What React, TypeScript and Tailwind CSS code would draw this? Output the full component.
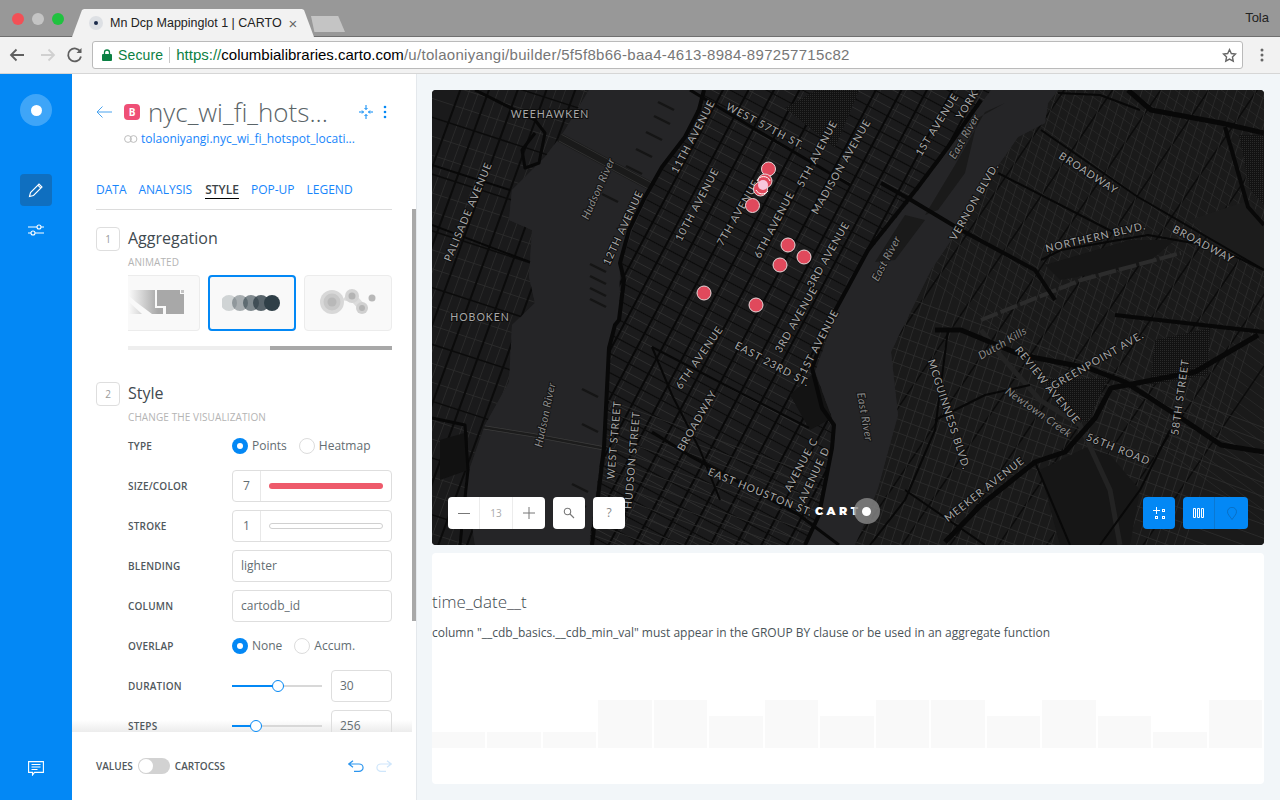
import React from 'react';

// Street grid helper: n parallel lines at an angle, offset from an origin
const lines = (ox: number, oy: number, deg: number, gap: number, n: number) => {
  const a = (deg * Math.PI) / 180;
  const dx = Math.cos(a);
  const dy = Math.sin(a);
  let d = '';
  for (let i = -n; i <= n; i++) {
    const px = ox - dy * gap * i;
    const py = oy + dx * gap * i;
    d += `M${(px - dx * 900).toFixed(1)} ${(py - dy * 900).toFixed(1)}L${(px + dx * 900).toFixed(1)} ${(py + dy * 900).toFixed(1)}`;
  }
  return d;
};

const poly = (pts: number[][]) => 'M' + pts.map((p) => p.join(' ')).join('L');

const NJ = [[432, 90], [589, 90], [565, 130], [545, 157], [512, 190], [509, 220], [532, 230], [529, 277], [535, 303], [512, 325], [509, 382], [485, 425], [465, 482], [475, 545], [432, 545]];
const MN = [[704, 90], [991, 90], [948, 150], [911, 200], [868, 253], [848, 280], [832, 325], [815, 372], [832, 418], [835, 438], [819, 515], [805, 545], [589, 545], [602, 448], [609, 348], [619, 320], [620, 267], [632, 230], [659, 173], [689, 130]];
const QN = [[1058, 90], [1264, 90], [1264, 545], [855, 545], [861, 532], [878, 488], [898, 415], [891, 352], [908, 317], [931, 270], [958, 230], [995, 170], [1018, 137], [1045, 123], [1048, 103]];

const ROADS: { w: number; pts: number[][] }[] = [
  { w: 4, pts: [[704, 90], [699, 110], [685, 137], [662, 167], [645, 197], [629, 230], [620, 263], [624, 280], [619, 320], [615, 325], [609, 348], [604, 448], [592, 545]] },
  { w: 4, pts: [[981, 100], [948, 147], [918, 187], [868, 250], [848, 287], [829, 322], [812, 368], [822, 408], [834, 425], [832, 448], [819, 515], [805, 545]] },
  { w: 4, pts: [[881, 183], [911, 200], [961, 230], [1035, 270], [1055, 300]] },
  { w: 3, pts: [[652, 432], [692, 457], [799, 515], [839, 545]] },
  { w: 2, pts: [[652, 347], [725, 385], [809, 428]] },
  { w: 3, pts: [[690, 90], [765, 135], [850, 185]] },
  { w: 2, pts: [[652, 347], [672, 395], [700, 450], [720, 500]] },
  { w: 5, pts: [[1128, 90], [1151, 110], [1221, 123], [1264, 133]] },
  { w: 4, pts: [[1225, 127], [1248, 207], [1264, 225]] },
  { w: 5, pts: [[935, 330], [961, 330], [1021, 355], [1088, 368], [1125, 382], [1181, 418], [1221, 445], [1264, 452]] },
  { w: 5, pts: [[945, 542], [981, 505], [1035, 462], [1065, 452], [1095, 418], [1111, 388], [1195, 372], [1258, 335]] },
  { w: 4, pts: [[1115, 315], [1264, 332]] },
  { w: 2, pts: [[1041, 130], [1138, 197], [1264, 270]] },
  { w: 2, pts: [[1041, 260], [1061, 250], [1148, 235], [1215, 247], [1264, 270]] },
  { w: 2, pts: [[998, 173], [1115, 233]] },
  { w: 2, pts: [[1058, 93], [1100, 95], [1140, 110]] },
  { w: 2, pts: [[948, 330], [935, 430], [905, 500], [870, 545]] },
  { w: 2, pts: [[1035, 462], [1070, 545]] },
  { w: 2, pts: [[1170, 430], [1140, 490], [1100, 545]] },
  { w: 2, pts: [[905, 490], [985, 545]] },
  { w: 2, pts: [[935, 420], [985, 395], [1030, 385]] },
  { w: 3, pts: [[475, 90], [535, 120], [545, 133], [539, 163], [525, 168], [522, 150], [535, 133]] },
  { w: 2, pts: [[432, 165], [510, 190]] },
  { w: 2, pts: [[432, 225], [530, 262]] },
  { w: 3, pts: [[432, 418], [465, 425], [468, 470], [460, 545]] },
];

const LABELS: [string, number, number, number][] = [
  ['WEEHAWKEN', 550, 115, 0],
  ['HOBOKEN', 480, 318, 0],
  ['PALISADE AVENUE', 469, 212, -67],
  ['12TH AVENUE', 624, 228, -65],
  ['11TH AVENUE', 694, 137, -62],
  ['10TH AVENUE', 698, 205, -62],
  ['7TH AVENUE', 739, 213, -60],
  ['6TH AVENUE', 775, 225, -62],
  ['5TH AVENUE', 818, 154, -62],
  ['MADISON AVENUE', 842, 167, -60],
  ['3RD AVENUE', 829, 255, -60],
  ['1ST AVENUE', 938, 125, -58],
  ['YORK', 968, 105, -58],
  ['WEST 57TH ST.', 765, 127, 28],
  ['VERNON BLVD.', 975, 202, -60],
  ['BROADWAY', 1088, 174, 33],
  ['BROADWAY', 1203, 245, 28],
  ['NORTHERN BLVD.', 1096, 238, -13],
  ['WEST STREET', 615, 440, -85],
  ['HUDSON STREET', 633, 460, -85],
  ['6TH AVENUE', 700, 358, -55],
  ['3RD AVENUE', 797, 320, -60],
  ['1ST AVENUE', 820, 342, -62],
  ['EAST 23RD ST.', 772, 365, 28],
  ['BROADWAY', 698, 421, -60],
  ['EAST HOUSTON ST.', 760, 493, 22],
  ['AVENUE C', 802, 465, -62],
  ['AVENUE D', 815, 475, -65],
  ['REVIEW AVENUE', 1047, 386, 51],
  ['GREENPOINT AVE.', 1098, 361, -30],
  ['MCGUINNESS BLVD.', 948, 415, 72],
  ['58TH STREET', 1181, 397, -82],
  ['56TH ROAD', 1118, 450, 22],
  ['MEEKER AVENUE', 985, 490, -38],
];

const WATER_LABELS: [string, number, number, number][] = [
  ['Hudson River', 599, 189, -66],
  ['Hudson River', 546, 415, -78],
  ['East River', 965, 137, -60],
  ['East River', 887, 259, -62],
  ['East River', 864, 417, 80],
  ['Dutch Kills', 1003, 344, -30],
  ['Newtown Creek', 1038, 413, 35],
];

const POINTS = [[704, 293], [756, 305], [780, 265], [788, 245], [804, 257], [752.5, 205.5], [768.5, 169], [765, 181], [760.5, 189]];

const BARS = [16, 16, 16, 48, 48, 32, 48, 32, 48, 48, 32, 48, 32, 16, 48];

const PIERS = [[672, 108], [668, 122], [660, 138], [650, 155], [640, 172], [616, 200], [604, 270], [604, 282], [604, 294], [604, 305], [596, 395], [596, 430], [586, 490], [584, 505]];

const MapCanvas = () => (
  <svg viewBox="432 90 832 455" className="block w-full h-full">
    <defs>
      <clipPath id="nj"><path d={poly(NJ)} /></clipPath>
      <clipPath id="mn"><path d={poly(MN)} /></clipPath>
      <clipPath id="qn"><path d={poly(QN)} /></clipPath>
      <pattern id="dots" width="2" height="2" patternUnits="userSpaceOnUse">
        <rect width="2" height="2" fill="#121212" />
        <rect width="1" height="1" fill="#2a2a2a" />
      </pattern>
    </defs>
    <rect x="432" y="90" width="832" height="455" fill="#252527" />
    {/* Bridges and tunnels across the water */}
    <path d="M559 137L652 187" stroke="#1a1a1a" strokeWidth="9" fill="none" />
    <path d="M559 133L652 183M559 141L652 191" stroke="#3a3a3a" strokeWidth="0.7" fill="none" />
    <path d="M469 425L532 435L602 448" stroke="#3c3c3c" strokeWidth="4" fill="none" />
    <path d="M469 425L532 435L602 448" stroke="#1c1c1c" strokeWidth="2.5" fill="none" />
    {PIERS.map(([x, y], i) => (
      <path key={i} d={`M${x - 14} ${y - 6}L${x + 2} ${y + 2}`} stroke="#151515" strokeWidth="2.5" />
    ))}
    <path d={poly([[1005, 103], [978, 118], [965, 173], [938, 210], [925, 215], [955, 165], [985, 112]])} fill="#1a1a1a" />
    <path d={poly([[905, 215], [925, 220], [895, 260], [875, 262]])} fill="#1a1a1a" />

    {/* New Jersey */}
    <g clipPath="url(#nj)">
      <path d={poly(NJ)} fill="#1a1a1b" />
      <path d={lines(470, 300, -70, 9, 8)} stroke="#2e2e2e" strokeWidth="0.8" fill="none" />
      <path d={lines(470, 300, 18, 18, 14)} stroke="#2e2e2e" strokeWidth="0.8" fill="none" />
      <path d={lines(470, 300, -70, 27, 3)} stroke="#0b0b0b" strokeWidth="2" fill="none" />
      <path d={lines(470, 300, 18, 54, 5)} stroke="#0b0b0b" strokeWidth="1.5" fill="none" />
      <path d={poly([[440, 440], [468, 432], [468, 470], [440, 480]])} fill="#111" />
    </g>

    {/* Manhattan */}
    <g clipPath="url(#mn)">
      <path d={poly(MN)} fill="#1b1b1c" />
      <path d={lines(760, 260, 28, 8.5, 50)} stroke="#343434" strokeWidth="0.8" fill="none" />
      <path d={lines(765, 260, -62, 22.5, 15)} stroke="#303030" strokeWidth="0.7" fill="none" />
      <path d={lines(760, 260, -62, 22.5, 15)} stroke="#090909" strokeWidth="2" fill="none" />
      <path d={lines(760, 260, 28, 17, 24)} stroke="#0b0b0b" strokeWidth="1.2" fill="none" />
      <path d={poly([[785, 108], [820, 88], [860, 88], [835, 148]])} fill="url(#dots)" />
      <path d={poly([[790, 395], [815, 372], [832, 418], [810, 430]])} fill="#131313" />
      <path d={lines(680, 520, 20, 11, 8)} stroke="#303030" strokeWidth="0.8" fill="none" />
    </g>

    {/* Queens and Brooklyn */}
    <g clipPath="url(#qn)">
      <path d={poly(QN)} fill="#1a1a1a" />
      <path d={lines(1100, 180, 36, 9, 20)} stroke="#2c2c2c" strokeWidth="0.7" fill="none" />
      <path d={lines(1100, 180, -56, 40, 6)} stroke="#0c0c0c" strokeWidth="1.5" fill="none" />
      <path d={lines(1000, 470, -72, 9, 22)} stroke="#2e2e2e" strokeWidth="0.8" fill="none" />
      <path d={lines(1000, 470, 20, 13, 10)} stroke="#2e2e2e" strokeWidth="0.8" fill="none" />
      <path d={poly([[1044, 378], [1108, 378], [1088, 422], [1062, 416]])} fill="url(#dots)" />
      <path d={poly([[1155, 340], [1210, 328], [1208, 375], [1150, 385]])} fill="url(#dots)" />
      <path d={poly([[1239, 135], [1264, 135], [1264, 205], [1250, 190]])} fill="url(#dots)" />
      <path d={poly([[1085, 448], [1110, 455], [1140, 490], [1130, 545], [1060, 545], [1040, 470]])} fill="#161616" />
      <path d={poly([[1045, 265], [1130, 240], [1175, 240], [1145, 265], [1060, 280]])} fill="#161616" />
      <path d={poly([[1190, 220], [1250, 200], [1264, 225], [1264, 270], [1220, 250]])} fill="#1c1c1c" />
      <path d="M981 320L1081 280L1181 253" stroke="#2c2c2c" strokeWidth="4" fill="none" strokeDasharray="18 3" />
      <path d="M981 330L1000 355L1040 400L1080 425L1110 490L1120 545" stroke="#232323" strokeWidth="5" fill="none" />
    </g>

    {ROADS.map((r, i) => (
      <path key={i} d={poly(r.pts)} stroke="#080808" strokeWidth={r.w} fill="none" strokeLinejoin="round" />
    ))}

    {LABELS.map(([t, x, y, r], i) => (
      <text
        key={i}
        x={x}
        y={y}
        transform={`rotate(${r} ${x} ${y})`}
        textAnchor="middle"
        dominantBaseline="middle"
        fontFamily="Lato, sans-serif"
        fontSize="10.5"
        letterSpacing="1"
        fill="#a8a8a8"
        stroke="#0e0e0e"
        strokeWidth="2"
        paintOrder="stroke"
      >
        {t}
      </text>
    ))}
    {WATER_LABELS.map(([t, x, y, r], i) => (
      <text
        key={i}
        x={x}
        y={y}
        transform={`rotate(${r} ${x} ${y})`}
        textAnchor="middle"
        dominantBaseline="middle"
        fontFamily="Lato, sans-serif"
        fontSize="11"
        fontStyle="italic"
        letterSpacing="0.4"
        fill="#8a8a8a"
        stroke="#141414"
        strokeWidth="2"
        paintOrder="stroke"
      >
        {t}
      </text>
    ))}

    {POINTS.map(([x, y], i) => (
      <circle key={i} cx={x} cy={y} r="7" fill="#e0495c" stroke="#e8d8da" strokeWidth="1" />
    ))}
    <circle cx="763" cy="185" r="5" fill="#f7c6dc" />
    <path d="M757 181A7 7 0 0 1 770 181M756 190A7 7 0 0 0 768 191" stroke="#fff" strokeWidth="1" fill="none" />
  </svg>
);

const Label = ({ children }: { children: React.ReactNode }) => (
  <span className="w-[104px] shrink-0 text-[10px] font-semibold tracking-[0.2px] text-[#50585c]">{children}</span>
);

const Radio = ({ on, label }: { on?: boolean; label: string }) => (
  <span className="flex items-center gap-1 text-xs text-[#636d72]">
    {on ? (
      <span className="flex h-4 w-4 items-center justify-center rounded-full bg-[#0388f5]">
        <span className="h-1.5 w-1.5 rounded-full bg-white" />
      </span>
    ) : (
      <span className="h-4 w-4 rounded-full border border-[#dcdcdc] bg-white" />
    )}
    {label}
  </span>
);

const Row = ({ label, children }: { label: string; children: React.ReactNode }) => (
  <div className="mb-2 flex h-8 items-center">
    <Label>{label}</Label>
    <div className="flex-1">{children}</div>
  </div>
);

const TextBox = ({ value }: { value: string }) => (
  <div className="flex h-8 items-center rounded border border-[#dedede] px-2 text-xs text-[#636d72]">{value}</div>
);

const BarBox = ({ value, stroke }: { value: string; stroke?: boolean }) => (
  <div className="flex h-8 items-center rounded border border-[#dedede] text-xs text-[#636d72]">
    <span className="flex h-full w-7 shrink-0 items-center border-r border-[#e8e8e8] pl-2.5">{value}</span>
    {stroke ? (
      <span className="ml-2 mr-2 h-[6px] flex-1 rounded-full border border-[#d0d0d0] bg-white" />
    ) : (
      <span className="ml-2 mr-2 h-[6px] flex-1 rounded-full bg-[#ee5a6b]" />
    )}
  </div>
);

const SliderRow = ({ label, value, pct }: { label: string; value: string; pct: number }) => (
  <div className="mb-2 flex h-8 items-center">
    <Label>{label}</Label>
    <div className="relative mr-[9px] h-[2px] flex-1 bg-[#d8d8d8]">
      <div className="h-full bg-[#0388f5]" style={{ width: `${pct}%` }} />
      <div
        className="absolute top-[-5px] ml-[-6px] h-3 w-3 rounded-full border border-[#0388f5] bg-white"
        style={{ left: `${pct}%` }}
      />
    </div>
    <div className="flex h-8 w-[61px] items-center rounded border border-[#dedede] pl-2 text-xs text-[#636d72]">{value}</div>
  </div>
);

const SectionHead = ({ n, title, sub }: { n: string; title: string; sub: string }) => (
  <div className="flex gap-2">
    <span className="flex h-6 w-6 shrink-0 items-center justify-center rounded border border-[#dedede] text-[10px] text-[#9a9a9a]">{n}</span>
    <div>
      <div className="h-6 text-base leading-[23px] text-[#3f4a50]">{title}</div>
      <div className="mt-[5px] text-[10px] leading-[12px] tracking-[0.1px] text-[#b4b4b4]">{sub}</div>
    </div>
  </div>
);

const Panel = () => (
  <div className="flex w-[345px] shrink-0 flex-col border-r border-[#e4e8ec] bg-white">
    <div className="h-[135px] shrink-0 px-6 pt-[28px]">
      <div className="flex h-5 items-center">
        <svg width="16" height="12" viewBox="0 0 16 12" className="shrink-0" fill="none" stroke="#4ba3ee" strokeWidth="1">
          <path d="M16 6H1M6.5.5L1 6l5.500 5.500" />
        </svg>
        <span className="ml-3 flex h-4 w-4 shrink-0 items-center justify-center rounded-sm bg-[#ef4f76] text-[10px] font-bold text-white">B</span>
        <span className="ml-2 whitespace-nowrap text-[26px] font-light leading-5 text-[#5a6468]">nyc_wi_fi_hots...</span>
        <svg width="16" height="16" viewBox="0 0 16 16" className="ml-[30px] shrink-0" fill="none" stroke="#0388f5" strokeWidth="1">
          <path d="M8 1v4.500M6.500 4L8 5.500 9.500 4M8 15v-4.500M6.500 12L8 10.500 9.500 12M1 8h4.500M4 6.500L5.500 8 4 9.500M15 8h-4.500M12 6.500L10.500 8 12 9.500" />
        </svg>
        <svg width="4" height="14" viewBox="0 0 4 14" className="ml-[9px] shrink-0" fill="#0388f5">
          <circle cx="2" cy="2" r="1.3" />
          <circle cx="2" cy="7" r="1.3" />
          <circle cx="2" cy="12" r="1.3" />
        </svg>
      </div>
      <div className="mt-[7px] flex h-5 items-center pl-7">
        <svg width="14" height="8" viewBox="0 0 14 8" fill="none" stroke="#bdbdbd" strokeWidth="1" className="shrink-0">
          <circle cx="4" cy="4" r="3.4" />
          <circle cx="9.5" cy="4" r="3.4" />
        </svg>
        <span className="ml-[3px] text-xs text-[#1785fb]">tolaoniyangi.nyc_wi_fi_hotspot_locati...</span>
      </div>
      <div className="mt-[31px] flex h-[20px] items-center gap-[12px] text-xs font-medium text-[#1785fb]">
        <span>DATA</span>
        <span>ANALYSIS</span>
        <span className="relative ml-px font-semibold text-[#3c4448]">
          STYLE
          <span className="absolute left-0 right-0 top-[16px] h-px bg-black" />
        </span>
        <span>POP-UP</span>
        <span>LEGEND</span>
      </div>
    </div>
    <div className="relative min-h-0 flex-1 overflow-hidden">
      <div className="absolute bottom-0 left-0 right-1 h-3 bg-gradient-to-b from-transparent to-[#ececec]" />
      <div className="relative mx-6 h-px bg-[#dcdcdc]" />
      <div className="absolute right-0 top-0 h-[412px] w-1 bg-[#a8a8a8]" />
      <div className="relative pl-6 pr-6 pt-[17px]">
        <SectionHead n="1" title="Aggregation" sub="ANIMATED" />
        <div className="ml-8 mt-[7px] flex gap-2">
          <div className="h-14 w-[72px] rounded-r border border-l-0 border-[#ececec] bg-[#f9f9f9]">
            <svg width="71" height="54" viewBox="0 0 71 54">
              <defs>
                <linearGradient id="fade" gradientUnits="userSpaceOnUse" x1="1" y1="0" x2="30" y2="0">
                  <stop offset="0" stopColor="#f9f9f9" />
                  <stop offset="1" stopColor="#a8a8a8" />
                </linearGradient>
              </defs>
              <path d="M1 14H27V32H35V38H24L8 26L1 20ZM1 26L14 38H1Z" fill="url(#fade)" />
              <path d="M29 14H52V18H56V38H38V30H29Z" fill="#a8a8a8" />
              <rect x="53" y="14" width="3" height="3" fill="#c4c4c4" />
            </svg>
          </div>
          <div className="flex h-14 w-[88px] items-center justify-center rounded border-2 border-[#0388f5] bg-[#f9f9f9]">
            <svg width="60" height="18" viewBox="2 0 60 18">
              <circle cx="9" cy="9" r="8" fill="#2f3f47" opacity="0.2" />
              <circle cx="20" cy="9" r="8" fill="#2f3f47" opacity="0.4" />
              <circle cx="31" cy="9" r="8" fill="#2f3f47" opacity="0.6" />
              <circle cx="41" cy="9" r="8" fill="#2f3f47" opacity="0.8" />
              <circle cx="52" cy="9" r="8" fill="#2f3f47" />
            </svg>
          </div>
          <div className="flex h-14 w-[88px] items-center justify-center rounded border border-[#ececec] bg-[#f9f9f9]">
            <svg width="60" height="28" viewBox="0 0 60 28">
              <circle cx="14" cy="13" r="12" fill="#d8d8d8" />
              <circle cx="14" cy="13" r="8.5" fill="#c8c8c8" />
              <circle cx="14" cy="13" r="4.5" fill="#b8b8b8" />
              <path d="M24 11L32 3L39 7L50 19L44 24L34 13Z" fill="#dcdcdc" />
              <circle cx="34" cy="7" r="7" fill="#d4d4d4" />
              <circle cx="34" cy="7" r="3.5" fill="#b4b4b4" />
              <circle cx="44" cy="19" r="6" fill="#d0d0d0" />
              <circle cx="44" cy="19" r="3" fill="#b4b4b4" />
              <circle cx="54" cy="9" r="3.5" fill="#b8b8b8" />
            </svg>
          </div>
        </div>
        <div className="ml-8 mt-[15px] flex h-1">
          <div className="w-[142px] bg-[#eeeeee]" />
          <div className="flex-1 bg-[#a8a8a8]" />
        </div>
        <div className="mt-8">
          <SectionHead n="2" title="Style" sub="CHANGE THE VISUALIZATION" />
        </div>
        <div className="ml-8 mt-[7px]">
          <Row label="TYPE">
            <div className="flex gap-[12px]">
              <Radio on label="Points" />
              <Radio label="Heatmap" />
            </div>
          </Row>
          <Row label="SIZE/COLOR"><BarBox value="7" /></Row>
          <Row label="STROKE"><BarBox value="1" stroke /></Row>
          <Row label="BLENDING"><TextBox value="lighter" /></Row>
          <Row label="COLUMN"><TextBox value="cartodb_id" /></Row>
          <Row label="OVERLAP">
            <div className="flex gap-[12px]">
              <Radio on label="None" />
              <Radio label="Accum." />
            </div>
          </Row>
          <SliderRow label="DURATION" value="30" pct={51} />
          <SliderRow label="STEPS" value="256" pct={27} />
        </div>
      </div>
    </div>
    <div className="flex h-[68px] shrink-0 items-center pl-6 pr-6">
      <span className="text-[10px] font-semibold text-[#50585c]">VALUES</span>
      <span className="ml-[5px] flex h-4 w-8 items-center rounded-full bg-[#d2d2d2] pl-[1px]">
        <span className="h-[14px] w-[14px] rounded-full bg-white" />
      </span>
      <span className="ml-[5px] text-[10px] font-semibold text-[#50585c]">CARTOCSS</span>
      <svg width="16" height="12" viewBox="0 0 16 12" className="ml-auto" fill="none" stroke="#2b95ee" strokeWidth="1.2">
        <path d="M5 .7L.8 4l4.200 3.300M.8 4H11a4 3.600 0 0 1 0 7.300H6" />
      </svg>
      <svg width="16" height="12" viewBox="0 0 16 12" className="ml-3" fill="none" stroke="#cfe6fb" strokeWidth="1.2">
        <path d="M11 .7L15.200 4 11 7.300M15.200 4H5a4 3.600 0 0 0 0 7.300h5" />
      </svg>
    </div>
  </div>
);

const BrowserChrome = () => (
  <div className="shrink-0 font-['Liberation_Sans',sans-serif]">
    <div className="flex h-[37px] items-end border-b border-[#6f6f6f] bg-[#989898]">
      <div className="flex h-full w-[72px] shrink-0 items-start gap-2 pl-3 pt-[13px]">
        <span className="h-3 w-3 shrink-0 rounded-full bg-[#f25056]" />
        <span className="h-3 w-3 shrink-0 rounded-full bg-[#c4c4c4]" />
        <span className="h-3 w-3 shrink-0 rounded-full bg-[#1fc23f]" />
      </div>
      <div className="relative -mb-px flex h-[28px] w-[242px] shrink-0 items-center bg-[#f2f2f2] pl-[17px] [clip-path:polygon(0_100%,10px_4%,12px_0,230px_0,232px_4%,100%_100%)]">
        <span className="flex h-[14px] w-[14px] shrink-0 items-center justify-center rounded-full bg-[#dde0e4]">
          <span className="h-1 w-1 rounded-full bg-[#1a2a4a]" />
        </span>
        <span className="ml-[7px] whitespace-nowrap text-[12.5px] text-[#222]">Mn Dcp Mappinglot 1 | CARTO</span>
        <span className="ml-[7px] text-[15px] leading-none text-[#666]">×</span>
      </div>
      <div className="mb-[4px] ml-[-3px] h-4 w-[34px] shrink-0 bg-[#c4c4c4] [clip-path:polygon(10%_100%,0_0,80%_0,100%_100%)]" />
      <span className="mb-[9px] ml-auto mr-[11px] text-[13px] text-[#222]">Tola</span>
    </div>
    <div className="flex h-[37px] items-center border-b border-[#d6d6d6] bg-[#f2f2f2]">
      <svg width="92" height="18" viewBox="0 0 92 18" className="shrink-0" fill="none" strokeWidth="1.8">
        <path d="M24 9H11M16.500 3.500L11 9l5.500 5.500" stroke="#5f5f5f" />
        <path d="M41 9h13M48.500 3.500L54 9l-5.500 5.500" stroke="#d0d0d0" />
        <path d="M80.500 6A6.500 6.500 0 1 0 81 10.500" stroke="#5f5f5f" />
        <path d="M81.500 2v5h-5z" fill="#5f5f5f" />
      </svg>
      <div className="flex h-[28px] flex-1 items-center rounded-[3px] border border-[#bababa] bg-white pl-[9px] text-sm">
        <svg width="10" height="12" viewBox="0 0 10 12" className="shrink-0">
          <rect y="5" width="10" height="7" rx="1" fill="#0b8043" />
          <path d="M2.500 5.500V3.500a2.500 2.500 0 0 1 5 0v2" fill="none" stroke="#0b8043" strokeWidth="1.300" />
        </svg>
        <span className="ml-[6px] tracking-[0.15px] text-[#0b8043]">Secure</span>
        <span className="mx-[6px] h-4 w-px bg-[#c8c8c8]" />
        <span className="text-[15px] text-[#0b8043]">https://</span>
        <span className="text-[15px] text-black">columbialibraries.carto.com</span>
        <span className="text-[15px] tracking-[0.3px] text-[#777]">/u/tolaoniyangi/builder/5f5f8b66-baa4-4613-8984-897257715c82</span>
        <svg width="15" height="15" viewBox="0 0 24 24" className="ml-auto mr-[5px]" fill="none" stroke="#666" strokeWidth="2.200">
          <path d="M12 2.500l2.900 6.300 6.800.8-5 4.700 1.300 6.800L12 17.700 6 21.100l1.300-6.800-5-4.700 6.800-.8z" />
        </svg>
      </div>
      <svg width="4" height="14" viewBox="0 0 4 14" className="ml-[17px] mr-4 shrink-0" fill="#666">
        <circle cx="2" cy="2" r="1.500" />
        <circle cx="2" cy="7" r="1.500" />
        <circle cx="2" cy="12" r="1.500" />
      </svg>
    </div>
  </div>
);

export default function App() {
  return (
    <div className="flex h-[800px] w-[1280px] flex-col overflow-hidden bg-[#f2f6f9] font-['Open_Sans',sans-serif]">
      <BrowserChrome />
      <div className="flex min-h-0 flex-1">
        {/* Side nav */}
        <div className="flex w-[72px] shrink-0 flex-col items-center bg-[#0388f5] pt-5">
          <span className="flex h-8 w-8 items-center justify-center rounded-full bg-[#3ea5f8]">
            <span className="h-[11px] w-[11px] rounded-full bg-white" />
          </span>
          <span className="mt-[48px] flex h-8 w-8 items-center justify-center rounded bg-[#0f6fc0]">
            <svg width="16" height="16" viewBox="0 0 16 16" fill="none" stroke="#fff" strokeWidth="1.100">
              <path d="M1.500 14.500l1-4L11 2l3 3-8.500 8.500zM9.800 3.200l3 3" />
            </svg>
          </span>
          <svg width="16" height="14" viewBox="0 0 16 14" className="mt-[17px]" fill="none" stroke="#fff" strokeWidth="1.100">
            <path d="M0 4h9M13 4h3M0 10h3M7 10h9" />
            <circle cx="11" cy="4" r="2" />
            <circle cx="5" cy="10" r="2" />
          </svg>
          <svg width="16" height="15" viewBox="0 0 16 15" className="mb-[24px] mt-auto" fill="none" stroke="#fff" strokeWidth="1.100">
            <path d="M.6.600h14.800v10.800H6.500L4.500 14V11.400H.6zM3.500 3.500h9M3.500 6h9M3.500 8.500h6" />
          </svg>
        </div>

        <Panel />

        {/* Map and widget */}
        <div className="flex min-w-0 flex-1 flex-col gap-2 pb-4 pl-[15px] pr-4 pt-4">
          <div className="relative h-[455px] shrink-0 overflow-hidden rounded-sm">
            <MapCanvas />
            <div className="absolute bottom-4 left-4 flex gap-2">
              <div className="flex h-8 w-[97px] items-center rounded bg-white text-[#aaa]">
                <span className="flex h-full w-8 items-center justify-center border-r border-[#ececec]">
                  <span className="h-px w-3 bg-[#777]" />
                </span>
                <span className="flex h-full w-[33px] items-center justify-center border-r border-[#ececec] text-[10px]">13</span>
                <svg width="12" height="12" viewBox="0 0 12 12" className="ml-[10px]" stroke="#777">
                  <path d="M0 6h12M6 0v12" />
                </svg>
              </div>
              <div className="flex h-8 w-8 items-center justify-center rounded bg-white">
                <svg width="12" height="12" viewBox="0 0 12 12" fill="none" stroke="#777" strokeWidth="1.100">
                  <circle cx="4.500" cy="4.500" r="3.200" />
                  <path d="M7 7l4 4" />
                </svg>
              </div>
              <div className="flex h-8 w-8 items-center justify-center rounded bg-white text-xs text-[#888]">?</div>
            </div>
            <div className="absolute bottom-[21px] left-[383px] flex items-center">
              <span className="font-['Montserrat','Lato',sans-serif] text-[11px] font-black leading-none tracking-[3.6px] text-white">CART</span>
              <span className="ml-[-8px] flex h-[26px] w-[26px] items-center justify-center rounded-full bg-[#8a8a8a]/80">
                <span className="h-[9px] w-[9px] rounded-full bg-white" />
              </span>
            </div>
            <div className="absolute bottom-4 right-4 flex gap-2">
              <div className="flex h-8 w-8 items-center justify-center rounded bg-[#0388f5]">
                <svg width="12" height="12" viewBox="0 0 12 12" fill="none" stroke="#fff">
                  <path d="M0 3.500h7M3.500 0v7" />
                  <rect x="9.500" y="2.500" width="2" height="2" />
                  <rect x="2.500" y="9.500" width="2" height="2" />
                  <rect x="9.500" y="9.500" width="2" height="2" />
                </svg>
              </div>
              <div className="flex h-8 w-[65px] rounded bg-[#0388f5]">
                <span className="flex h-full w-8 items-center justify-center border-r border-[#0a78d2]">
                  <svg width="12" height="10" viewBox="0 0 12 10" fill="none" stroke="#fff">
                    <path d="M.5.500h2v9h-2zM4.500.500h2v9h-2zM8.500.500h2v9h-2z" />
                  </svg>
                </span>
                <span className="flex h-full flex-1 items-center justify-center">
                  <svg width="10" height="13" viewBox="0 0 10 13" fill="none" stroke="#0a6fc4">
                    <path d="M5 12.500C2.500 9 .5 7 .5 4.800a4.500 4.500 0 0 1 9 0C9.500 7 7.500 9 5 12.500z" />
                  </svg>
                </span>
              </div>
            </div>
          </div>
          <div className="flex h-[231px] shrink-0 flex-col rounded bg-white">
            <div className="mt-[39px] text-[17px] font-light leading-5 text-[#3f4a50]">time_date__t</div>
            <div className="mt-[13px] text-xs leading-4 text-[#4a5459]">
              column "__cdb_basics.__cdb_min_val" must appear in the GROUP BY clause or be used in an aggregate function
            </div>
            <div className="mt-[59px] flex h-12 items-end gap-[2px] pr-[2px]">
              {BARS.map((h, i) => (
                <div key={i} className="flex-1 bg-[#f9f9f9]" style={{ height: h }} />
              ))}
            </div>
          </div>
        </div>
      </div>
    </div>
  );
}
